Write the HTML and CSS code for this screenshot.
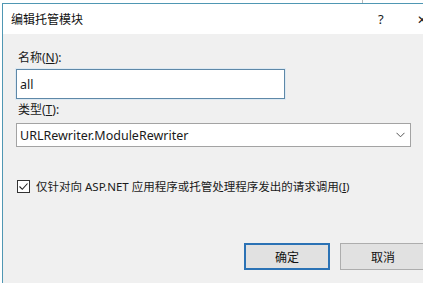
FILE: index.html
```html
<!DOCTYPE html>
<html lang="zh-CN">
<head>
    <meta charset="UTF-8">
    <title>编辑托管模块</title>
    <link rel="stylesheet" href="styles.css">
</head>
<body>
    <div class="behind">
        <span class="behind-sep"></span>
    </div>
    <div class="dialog">
        <div class="titlebar">
            <span class="title">编辑托管模块</span>
            <span class="help">?</span>
            <span class="close">✕</span>
        </div>
        <div class="body">
            <label class="lbl">名称(<u>N</u>):</label>
            <div class="textbox">all</div>
            <label class="lbl lbl-type">类型(<u>T</u>):</label>
            <div class="combo">
                <span>URLRewriter.ModuleRewriter</span>
                <svg class="chev" width="9" height="6" viewBox="0 0 9 6"><path d="M0.5 0.8 L4.5 4.8 L8.5 0.8" fill="none" stroke="#555" stroke-width="1"/></svg>
            </div>
            <div class="check-row">
                <span class="checkbox">
                    <svg width="11" height="11" viewBox="0 0 11 11"><path d="M1.5 5.5 L4.3 8.3 L9.5 2.5" fill="none" stroke="#222" stroke-width="1.1"/></svg>
                </span>
                <span>仅针对向 ASP.NET 应用程序或托管处理程序发出的请求调用(<u>I</u>)</span>
            </div>
            <div class="buttons">
                <button class="btn btn-default">确定</button>
                <button class="btn">取消</button>
            </div>
        </div>
    </div>
</body>
</html>
```

FILE: styles.css
```css
html, body {
    margin: 0;
    padding: 0;
}
body {
    width: 423px;
    height: 283px;
    overflow: hidden;
    position: relative;
    background: #ffffff;
    font-family: "Noto Sans", "Noto Sans CJK SC", sans-serif;
    font-size: 12px;
    color: #1a1a1a;
}
.behind {
    height: 3px;
    display: flex;
}
.behind-sep {
    margin-left: 362px;
    width: 1px;
    background: #b8b8b8;
}
.dialog {
    position: absolute;
    left: 2px;
    top: 3px;
    right: -4px;
    bottom: -10px;
    border-left: 1px solid #4f97b3;
    border-top: 1px solid #4f97b3;
    background: #f0f0f0;
}
.titlebar {
    height: 30px;
    background: #ffffff;
    display: flex;
    align-items: center;
    padding-left: 8px;
}
.title {
    font-size: 12px;
    color: #111;
    flex: 1;
}
.help {
    width: 10px;
    font-size: 13px;
    margin-right: 29px;
}
.close {
    font-size: 12px;
    width: 10px;
}
.body {
    padding: 16px 0 0 13px;
    display: flex;
    flex-direction: column;
    align-items: flex-start;
}
.lbl {
    line-height: 16px;
    height: 16px;
    margin-left: 2px;
}
.lbl u {
    text-underline-offset: 1px;
}
.textbox {
    margin-top: 3px;
    width: 264px;
    height: 28px;
    border: 1px solid #5e88a8;
    box-shadow: 0 0 0 1px #dde9f2;
    background: #fff;
    display: flex;
    align-items: center;
    padding-left: 3px;
    box-sizing: content-box;
    font-size: 12.5px;
}
.lbl-type {
    margin-top: 3px;
}
.combo {
    margin-top: 5px;
    width: 386px;
    height: 22px;
    border: 1px solid #a3a3a3;
    background: #fff;
    display: flex;
    align-items: center;
    justify-content: space-between;
    padding: 0 4px 0 3px;
    font-size: 12.5px;
}
.chev {
    margin-right: 1px;
}
.check-row {
    margin-top: 31px;
    display: flex;
    align-items: center;
    gap: 6px;
    margin-left: 1px;
    font-size: 11.5px;
}
.checkbox {
    width: 11px;
    height: 11px;
    border: 1px solid #333;
    background: #fff;
    display: flex;
}
.buttons {
    margin-top: 49px;
    margin-left: 228px;
    display: flex;
    gap: 10px;
}
.btn {
    width: 86px;
    height: 27px;
    background: #e1e1e1;
    border: 1px solid #adadad;
    font-family: "Noto Sans CJK SC", sans-serif;
    font-size: 12px;
    color: #111;
    padding: 0;
}
.btn-default {
    border: 2px solid #2b72b5;
}
```
